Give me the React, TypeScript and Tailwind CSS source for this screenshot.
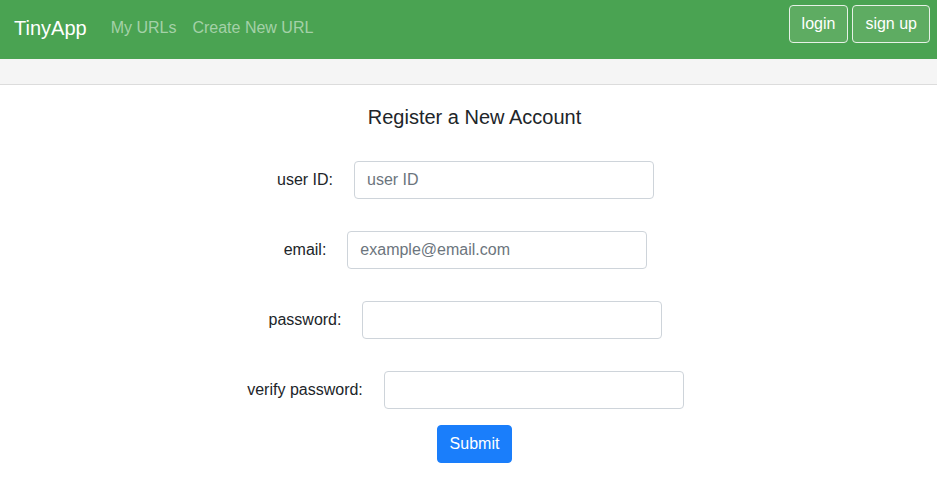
import React from 'react'

const fields = [
  { label: 'user ID:', type: 'text', placeholder: 'user ID' },
  { label: 'email:', type: 'email', placeholder: 'example@email.com' },
  { label: 'password:', type: 'password', placeholder: '' },
  { label: 'verify password:', type: 'password', placeholder: '' },
]

const App = () => {
  return (
    <div className="min-h-screen bg-white font-['Liberation_Sans',Arial,sans-serif] text-[#212529]">
      {/* Navbar */}
      <nav className="h-[59px] bg-[#4aa352] flex items-center justify-between pl-[14px] pr-[7px] pb-[4px]">
        <div className="flex items-center">
          <span className="text-[20px] text-white mr-[24px]">TinyApp</span>
          <a className="text-[16px] text-[#a4d1a8] mr-[16px]">My URLs</a>
          <a className="text-[16px] text-[#a4d1a8]">Create New URL</a>
        </div>
        <div className="flex items-center gap-[4px] mb-[7px]">
          <button className="h-[38px] px-[12px] rounded-[4px] border border-[#e6f1e6] bg-[#5eac62] text-white text-[16px]">
            login
          </button>
          <button className="h-[38px] px-[12px] rounded-[4px] border border-[#e6f1e6] bg-[#5eac62] text-white text-[16px]">
            sign up
          </button>
        </div>
      </nav>
      <div className="h-[26px] bg-[#f5f5f5] border-b border-[#dcdcdc]" />

      <main className="pt-[20px]">
        <h5 className="text-center text-[20px] leading-[24px] pl-[12px]">Register a New Account</h5>
        <form className="mt-[32px] flex flex-col gap-[32px]">
          {fields.map((f) => (
            <div key={f.label} className="flex items-center justify-center gap-[21px] pr-[6px]">
              <label className="text-[16px]">{f.label}</label>
              <input
                type={f.type}
                placeholder={f.placeholder}
                className="w-[300px] h-[38px] px-[12px] rounded-[4px] border border-[#ced4da] text-[16px] placeholder:text-[#6c757d] outline-none"
              />
            </div>
          ))}
        </form>
        <div className="flex justify-center pl-[12px] mt-[16px]">
          <button className="h-[38px] px-[12px] rounded-[4px] border border-[#1a7efb] bg-[#1a7efb] text-white text-[16px]">Submit</button>
        </div>
      </main>
    </div>
  )
}

export default App
